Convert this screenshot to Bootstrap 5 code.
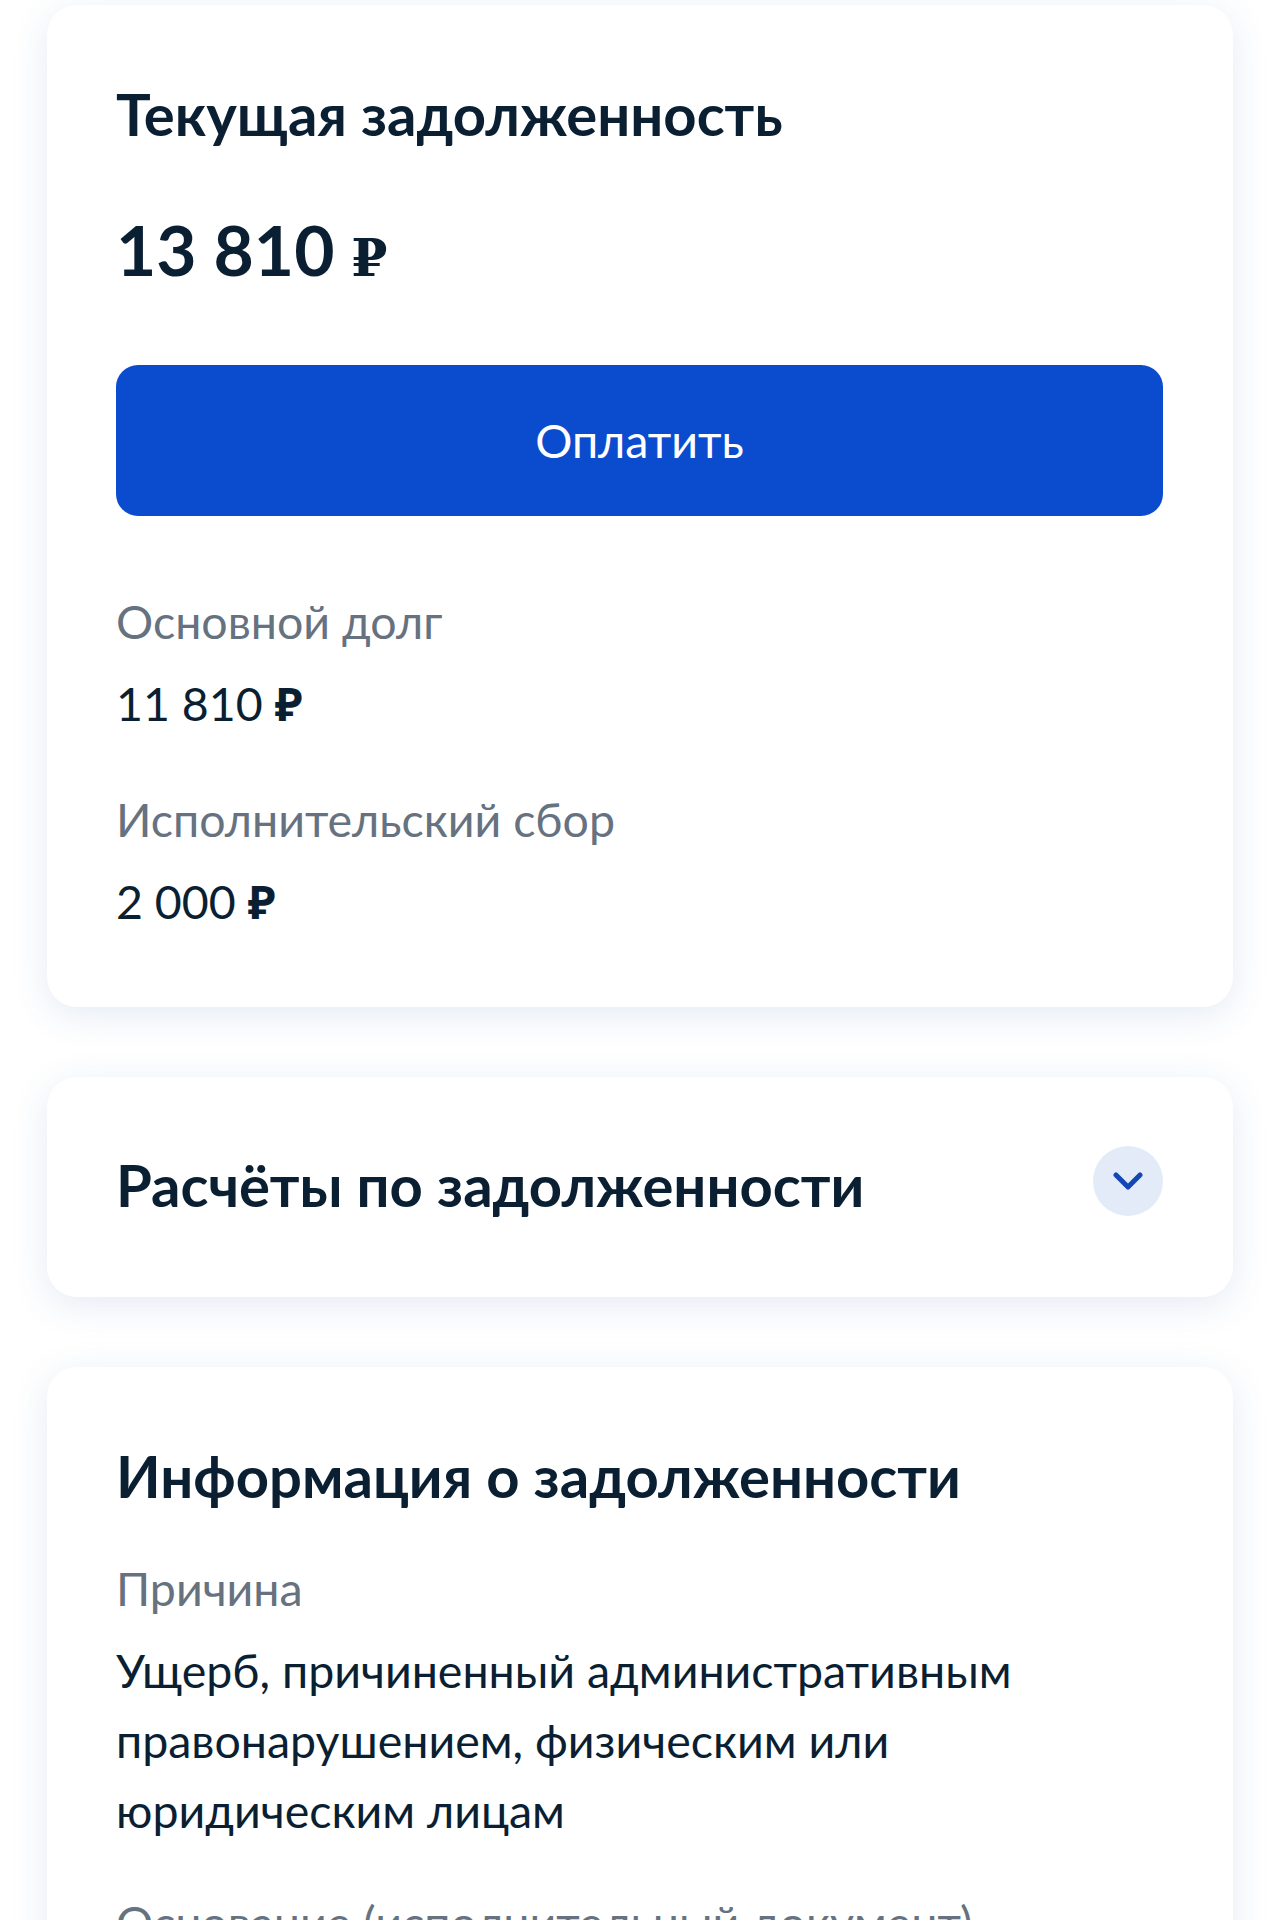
<!DOCTYPE html>
<html lang="ru">
<head>
  <meta charset="UTF-8"/>
  <title>Текущая задолженность</title>
  <link href="https://cdn.jsdelivr.net/npm/bootstrap@5.3.0/dist/css/bootstrap.min.css" rel="stylesheet"/>
  <script src="https://cdn.jsdelivr.net/npm/bootstrap@5.3.0/dist/js/bootstrap.bundle.min.js"></script>
  <style>
    html, body { height: 1920px; overflow: hidden; }
    body { background: #fff; font-family: Lato, "Noto Sans", sans-serif; color: #0b1f33; }
    .page-wrap { padding: 5px 47px 0; display: flex; flex-direction: column; gap: 70px; }
    .debt-card { border: 0; border-radius: 30px; box-shadow: 0 8px 36px rgba(50, 90, 170, .13); padding: 77px 70px 71px 69px; color: #0b1f33; }
    .debt-card-toggle { padding: 69px 70px 80px 69px; }
    .debt-card-info { padding-top: 77px; }
    .debt-title { font-size: 58px; line-height: 64px; font-weight: 700; margin: 0; }
    .debt-title-offset { margin-top: 7px; }
    .debt-sum { font-size: 69.5px; line-height: 80px; font-weight: 700; margin-top: 63px; }
    .rub-big { font-family: "DejaVu Serif", serif; font-size: 52px; font-weight: 700; line-height: 0; }
    .rub-small { font-family: "Noto Sans", sans-serif; font-weight: 700; font-size: 46px; line-height: 0; }
    .pay-btn { background: #0b4ccf; color: #fff; font-size: 46.5px; height: 151px; border-radius: 22px; border: 0; margin-top: 76px; width: 100%; }
    .pay-btn:hover { background: #0b4ccf; color: #fff; }
    .field-label { color: #66727f; font-size: 46.5px; line-height: 56px; }
    .field-value { font-size: 46.5px; line-height: 70px; margin-top: 19px; }
    .gap-first { margin-top: 77px; }
    .gap-next { margin-top: 53px; }
    .gap-info { margin-top: 52px; }
    .gap-last { margin-top: 49px; }
    .chevron-btn { width: 70px; height: 70px; border-radius: 50%; background: #e3ebf9; flex-shrink: 0; }
  </style>
</head>
<body>
<div class="page-wrap">
  <div class="card debt-card">
    <h1 class="debt-title">Текущая задолженность</h1>
    <div class="debt-sum">13 810 <span class="rub-big">₽</span></div>
    <button class="btn pay-btn">Оплатить</button>
    <div class="field-label gap-first">Основной долг</div>
    <div class="field-value">11 810 <span class="rub-small">₽</span></div>
    <div class="field-label gap-next">Исполнительский сбор</div>
    <div class="field-value">2 000 <span class="rub-small">₽</span></div>
  </div>
  <div class="card debt-card debt-card-toggle">
    <div class="d-flex justify-content-between align-items-start">
      <h2 class="debt-title debt-title-offset">Расчёты по задолженности</h2>
      <div class="chevron-btn d-flex align-items-center justify-content-center">
        <svg width="30" height="18" viewBox="0 0 30 18" fill="none"><path d="M3 3l12 12L27 3" stroke="#1347b5" stroke-width="5" stroke-linecap="round" stroke-linejoin="round"/></svg>
      </div>
    </div>
  </div>
  <div class="card debt-card debt-card-info">
    <h2 class="debt-title">Информация о задолженности</h2>
    <div class="field-label gap-info">Причина</div>
    <div class="field-value">Ущерб, причиненный административным правонарушением, физическим или юридическим лицам</div>
    <div class="field-label gap-last">Основание (исполнительный документ)</div>
  </div>
</div>
</body>
</html>
